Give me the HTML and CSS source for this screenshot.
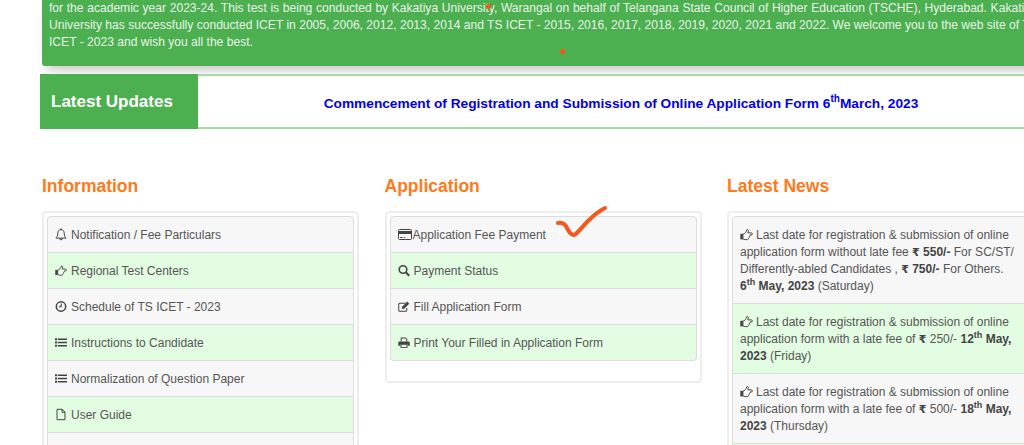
FILE: index.html
```html
<!DOCTYPE html>
<html><head>
<meta charset="utf-8"><title>TS ICET 2023</title>
<link rel="stylesheet" href="styles.css">
</head>
<body>
<svg class="defs" width="0" height="0">
<symbol id="i-bell" viewBox="0 0 12 13"><path d="M6 1.600C3.900 1.600 2.800 3.100 2.800 5.200c0 2.900-1 4-1.900 4.900h10.200c-.9-.9-1.900-2-1.900-4.900 0-2.100-1.100-3.600-3.200-3.600zM4.500 10.300a1.500 1.500 0 0 0 3 0M6 .5v1.100" fill="none" stroke="currentColor" stroke-width="1"/></symbol>
<symbol id="i-hand" viewBox="0 0 13 13"><rect x=".3" y="5.800" width="2.600" height="5.600" fill="currentColor"/><path d="M2.900 6.200c1.800-.3 3.300-2 4-4.600 1.100-.4 1.800.7 1.300 2l-.4 1.300h3.500c1.500 0 1.500 2 0 2h-1.200c.2.800-.1 1.400-.7 1.600.1.800-.2 1.400-.9 1.600.1.900-.5 1.500-1.300 1.500H5.200c-.9 0-1.400-.5-2.300-.7z" fill="#fff" fill-opacity="0.35" stroke="currentColor" stroke-width="1"/></symbol>
<symbol id="i-clock" viewBox="0 0 12 12"><circle cx="6" cy="6" r="4.700" fill="none" stroke="currentColor" stroke-width="1.500"/><path d="M6.200 3v3.300H3.800" fill="none" stroke="currentColor" stroke-width="1.100"/></symbol>
<symbol id="i-list" viewBox="0 0 12 12"><path d="M0 1.800h2.200v2H0zM0 5h2.200v2H0zM0 8.200h2.200v2H0zM3 2h9v1.600H3zM3 5.200h9v1.600H3zM3 8.400h9V10H3z" fill="currentColor"/></symbol>
<symbol id="i-file" viewBox="0 0 12 12"><path d="M2 .8h5.200L10 3.600v7.600H2zM7 .8v3h3" fill="none" stroke="currentColor" stroke-width="1"/></symbol>
<symbol id="i-card" viewBox="0 0 14 12"><rect x=".5" y="1" width="13" height="10" rx="1" fill="none" stroke="currentColor" stroke-width="1"/><rect x="1" y="2.500" width="12" height="3" fill="currentColor"/><path d="M2 9h2.500M5.500 9h1.500" stroke="currentColor" stroke-width=".9"/></symbol>
<symbol id="i-search" viewBox="0 0 12 12"><circle cx="5" cy="5" r="3.800" fill="none" stroke="currentColor" stroke-width="1.600"/><path d="M7.800 7.800l3.400 3.400" stroke="currentColor" stroke-width="2"/></symbol>
<symbol id="i-edit" viewBox="0 0 13 12"><path d="M9.500 7.500V10a1.200 1.200 0 0 1-1.200 1.200H2A1.200 1.200 0 0 1 .8 10V3.800A1.200 1.200 0 0 1 2 2.600h6" fill="none" stroke="currentColor" stroke-width="1.100"/><path d="M4.500 6.200L10 .7l2.200 2.200-5.500 5.500-2.500.3z" fill="currentColor"/></symbol>
<symbol id="i-print" viewBox="0 0 13 12"><path d="M3.500 5V1h4.600L9.500 2.400V5" fill="none" stroke="currentColor" stroke-width="1.100"/><path d="M1.500 4.800h10c.7 0 1.200.5 1.200 1.200v3.400H10.300V7.600H2.700v1.800H.3V6c0-.7.500-1.200 1.200-1.200z" fill="currentColor"/><rect x="3.200" y="8" width="6.600" height="3.300" fill="none" stroke="currentColor" stroke-width="1"/></symbol>
</svg>

<div id="pagina">
<div id="intro"><span class="riga-larga">for the academic year 2023-24. This test is being conducted by Kakatiya University, Warangal on behalf of Telangana State Council of Higher Education (TSCHE), Hyderabad. Kakatiya</span><br>
University has successfully conducted ICET in 2005, 2006, 2012, 2013, 2014 and TS ICET - 2015, 2016, 2017, 2018, 2019, 2020, 2021 and 2022. We welcome you to the web site of TS<br>
ICET - 2023 and wish you all the best.</div>

<div id="updates">
<div id="updates-titolo">Latest Updates</div>
<div id="updates-testo">Commencement of Registration and Submission of Online Application Form 6<sup>th</sup>March, 2023</div>
</div>

<div id="colonne">
<div class="colonna">
<h3>Information</h3>
<div class="pannello">
<ul class="lista">
<li class="riga"><svg class="ico"><use href="#i-bell"/></svg>Notification / Fee Particulars</li>
<li class="riga verde"><svg class="ico"><use href="#i-hand"/></svg>Regional Test Centers</li>
<li class="riga"><svg class="ico"><use href="#i-clock"/></svg>Schedule of TS ICET - 2023</li>
<li class="riga verde"><svg class="ico"><use href="#i-list"/></svg>Instructions to Candidate</li>
<li class="riga"><svg class="ico"><use href="#i-list"/></svg>Normalization of Question Paper</li>
<li class="riga verde"><svg class="ico"><use href="#i-file"/></svg>User Guide</li>
<li class="riga">&nbsp;</li>
</ul>
</div>
</div>

<div class="colonna">
<h3>Application</h3>
<div class="pannello">
<ul class="lista">
<li class="riga"><svg class="ico ico-card"><use href="#i-card"/></svg>Application Fee Payment</li>
<li class="riga verde"><svg class="ico"><use href="#i-search"/></svg>Payment Status</li>
<li class="riga"><svg class="ico"><use href="#i-edit"/></svg>Fill Application Form</li>
<li class="riga verde"><svg class="ico"><use href="#i-print"/></svg>Print Your Filled in Application Form</li>
</ul>
</div>
</div>

<div class="colonna">
<h3>Latest News</h3>
<div class="pannello">
<ul class="lista">
<li class="riga news"><svg class="ico ico-hand"><use href="#i-hand"/></svg>Last date for registration &amp; submission of online application form without late fee <b><span class="rs">₹</span> 550/-</b> For SC/ST/ Differently-abled Candidates , <b><span class="rs">₹</span> 750/-</b> For Others.<br><b>6<sup>th</sup> May, 2023</b> (Saturday)</li>
<li class="riga news verde"><svg class="ico ico-hand"><use href="#i-hand"/></svg>Last date for registration &amp; submission of online application form with a late fee of <b class="rs">₹</b> 250/- <b>12<sup>th</sup> May, 2023</b> (Friday)</li>
<li class="riga news"><svg class="ico ico-hand"><use href="#i-hand"/></svg>Last date for registration &amp; submission of online application form with a late fee of <b class="rs">₹</b> 500/- <b>18<sup>th</sup> May, 2023</b> (Thursday)</li>
<li class="riga news verde">&nbsp;</li>
</ul>
</div>
</div>
</div>

<!-- segni a penna sopra la pagina -->
<span class="punto punto1"></span>
<span class="punto punto2"></span>
<svg id="spunta" width="60" height="40" viewBox="0 0 60 40"><ellipse cx="9" cy="29" rx="5" ry="3" fill="#fff" opacity="0.8"/><path d="M4 19c4-1 7 1 9 5 2 4 4 7 7 7 3-1 8-8 14-14 5-5 11-10 17-13" fill="none" stroke="#f4581a" stroke-width="4" stroke-linecap="round" stroke-linejoin="round"/></svg>
</div>
</body></html>
```

FILE: styles.css
```css
html, body {
height: 445px;
overflow: hidden;
}
body {
margin: 0;
background-color: #fff;
font-family: "Liberation Sans", Arial, sans-serif;
font-size: 12px;
color: #555;
}
.defs {
display: block;
height: 0;
}
#pagina {
position: relative;
width: 1060px;
height: 445px;
}
#intro {
margin-left: 42px;
width: 1002px;
height: 66px;
box-sizing: border-box;
padding-left: 7px;
border-radius: 0 0 3px 3px;
background-color: #4caf50;
color: #e8f5e8;
font-size: 12.08px;
line-height: 17px;
white-space: nowrap;
box-shadow: 0 9px 10px -5px rgba(0,0,0,0.22);
}
.riga-larga {
word-spacing: 0.3px;
}
#updates {
position: relative;
display: flex;
margin-top: 8px;
margin-left: 40px;
height: 55px;
box-sizing: border-box;
border-top: 2px solid #a5dca8;
border-bottom: 2px solid #a5dca8;
background-color: #fff;
}
#updates-titolo {
width: 158px;
box-sizing: border-box;
padding-left: 11px;
margin: -2px 0;
background-color: #4caf50;
color: #fff;
font-size: 17px;
font-weight: bold;
line-height: 56px;
}
#updates-testo {
width: 846px;
text-align: center;
color: #0000ee;
font-size: 13.7px;
font-weight: bold;
line-height: 55px;
}
#updates-testo sup {
font-size: 10px;
line-height: 0;
}
#colonne {
display: grid;
grid-template-columns: 317px 317px 317px;
column-gap: 25.5px;
margin-left: 42px;
margin-top: 46px;
}
.colonna h3 {
margin: 0 0 14px;
color: #ff7a1a;
font-size: 17.5px;
font-weight: bold;
line-height: 22px;
}
.pannello {
border: 2px solid #eeeeee;
border-radius: 4px;
padding: 3px 3px 20px;
}
.lista {
margin: 0;
padding: 0;
list-style-type: none;
}
.riga {
display: block;
padding: 10px 7px 8px;
border: 1px solid #dddddd;
border-top: none;
background-color: #f7f7f7;
line-height: 17px;
}
.riga:first-child {
border-top: 1px solid #dddddd;
border-radius: 4px 4px 0 0;
}
.riga:last-child {
border-radius: 0 0 4px 4px;
}
.verde {
background-color: #e3fde3;
}
.riga sup {
font-size: 9px;
line-height: 0;
}
.riga b {
color: #444;
}
.ico {
width: 12px;
height: 13px;
margin-right: 4px;
vertical-align: -2px;
color: #444;
}
.ico-card {
width: 14px;
margin-right: 1px;
}
.ico-hand {
width: 13px;
margin-right: 3px;
}
.rs {
font-family: "DejaVu Sans", sans-serif;
font-size: 11px;
font-weight: bold;
}
.punto {
position: absolute;
width: 5px;
height: 5px;
border-radius: 2px;
background-color: #f4581a;
}
.punto1 {
left: 486px;
top: 4px;
}
.punto2 {
left: 560px;
top: 49px;
}
#spunta {
position: absolute;
left: 554px;
top: 204px;
}
```
